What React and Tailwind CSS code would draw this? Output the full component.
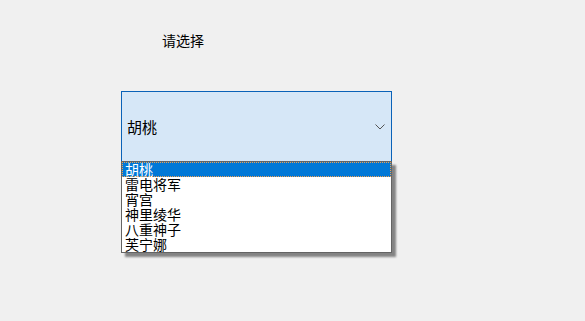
import React from 'react';

const options = ['胡桃', '雷电将军', '宵宫', '神里绫华', '八重神子', '芙宁娜'];

function Chevron() {
  return (
    <svg width="10" height="6" viewBox="0 0 10 6" className="shrink-0">
      <path d="M0.5 0.5 L5 5 L9.5 0.5" fill="none" stroke="#555" strokeWidth="1" />
    </svg>
  );
}

export default function App() {
  const selected = 0;
  return (
    <div
      className="w-[585px] h-[321px] bg-[#f0f0f0] text-black overflow-hidden"
      style={{ fontFamily: '"Noto Sans CJK SC", "Noto Sans", sans-serif' }}
    >
      <div className="pt-[31px] pl-[162px] text-[14px] leading-[18px]">请选择</div>
      <div className="relative ml-[121px] mt-[42px] w-[271px]">
        <div className="h-[71px] flex items-center justify-between pl-[5px] pr-[6px] bg-[#d6e7f7] border border-[#0a62b8]">
          <span className="text-[15px] leading-[18px]">胡桃</span>
          <Chevron />
        </div>
        <ul className="absolute left-0 top-[70px] w-[271px] h-[92px] bg-white border border-[#646464] shadow-[4px_4px_2px_rgba(0,0,0,0.45)]">
          {options.map((o, i) => (
            <li
              key={o}
              className={
                i === selected
                  ? 'h-[15px] leading-[15px] text-[14px] pl-[3px] bg-[#0078d7] text-white outline outline-1 outline-dotted outline-[#f0a050] -outline-offset-1'
                  : 'h-[15px] leading-[15px] text-[14px] pl-[3px]'
              }
            >
              {o}
            </li>
          ))}
        </ul>
      </div>
    </div>
  );
}
